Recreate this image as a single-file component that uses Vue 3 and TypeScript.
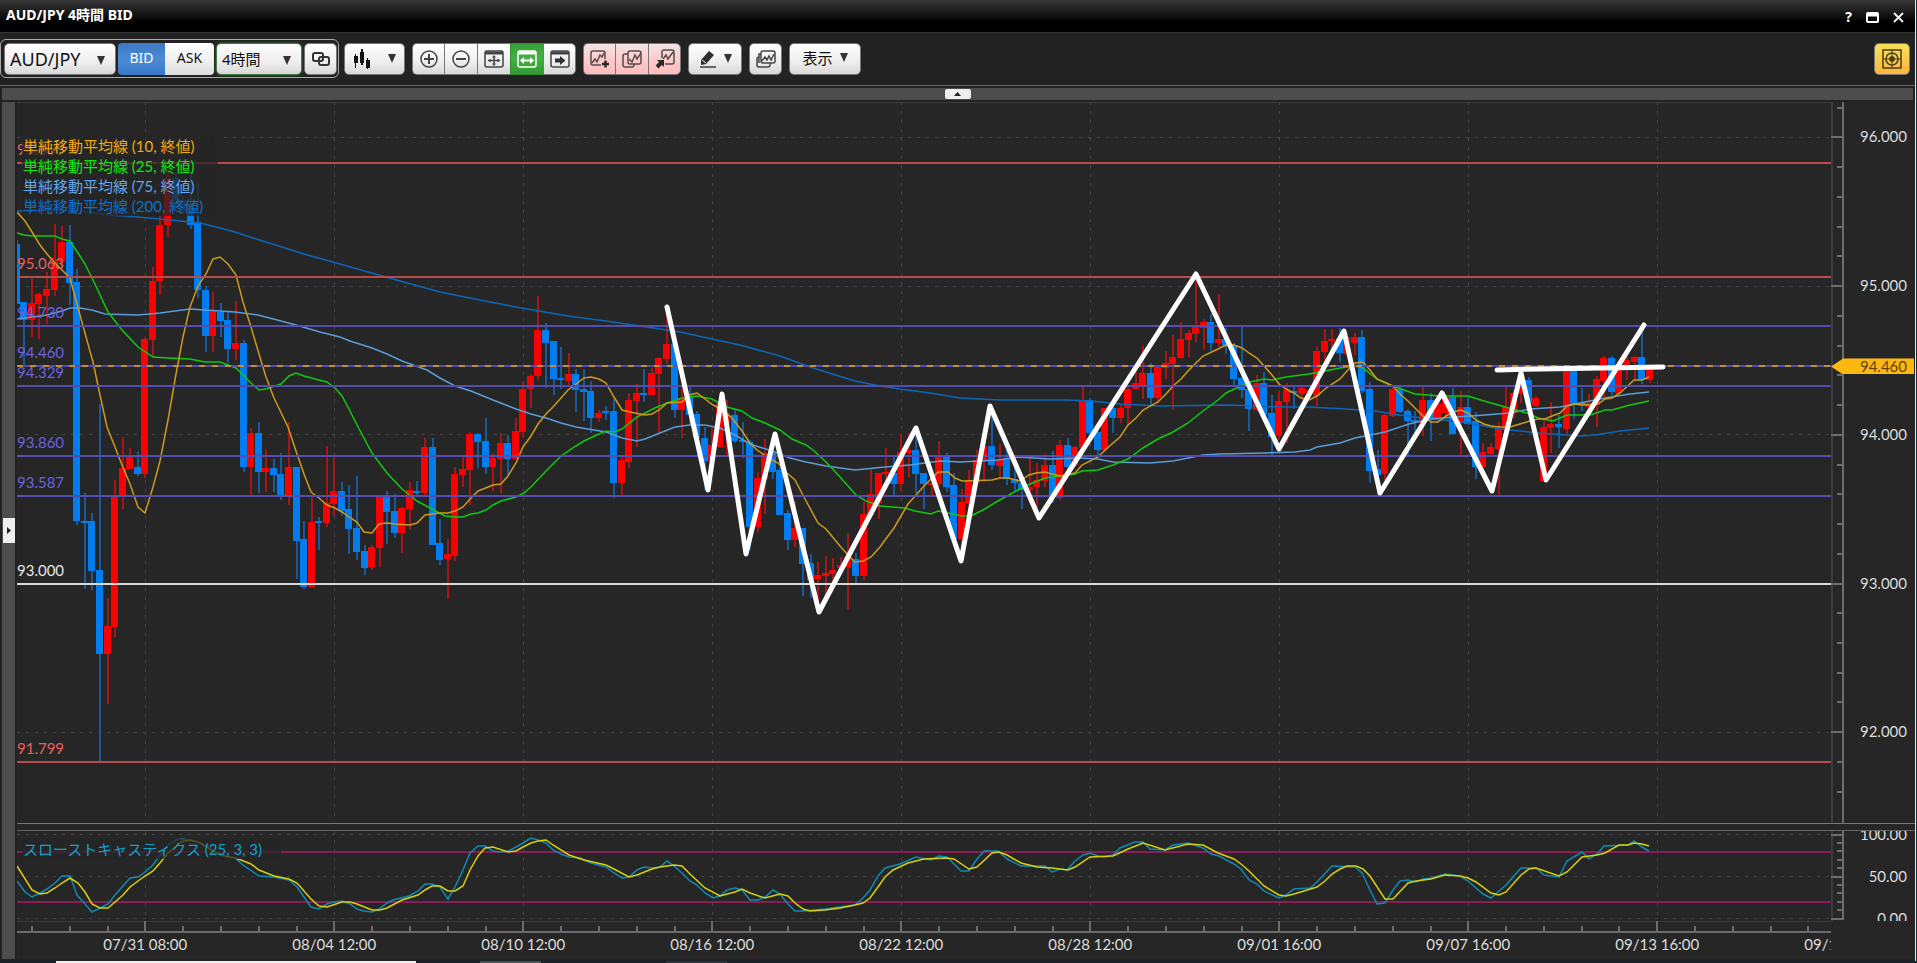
<script setup lang="ts">
import { ref } from 'vue'

type Pane = { x: number; y: number; w: number; h: number }
type Candle = { x: number; up: boolean; high: number; top: number; bottom: number; low: number }

const pair = ref('AUD/JPY')
const span = ref('4時間')
const side = ref<'BID' | 'ASK'>('BID')

const main: Pane = { x: 17, y: 102, w: 1814, h: 721 }
const stoch: Pane = { x: 17, y: 831, w: 1814, h: 90 }
const time: Pane = { x: 17, y: 921, w: 1814, h: 38 }
const viewBox = (p: Pane) => `${p.x} ${p.y} ${p.w} ${p.h}`
const pctY = (y: number, p: Pane) => `${((y - p.y) / p.h) * 100}%`
const pctX = (x: number, p: Pane) => `${((x - p.x) / p.w) * 100}%`

const priceY = (price: number) => 137.4 + (96 - price) * 148.7
const stochY = (v: number) => 918.5 - v * 0.84
const barX = (i: number) => 145.3 + i * 7.56

// r = rising, f = falling, then high, body top, body bottom, low
const bars = `
f 240 244 304 304;f 302 302 320 367;r 279 303 320 337;r 293 294 304 339;r 272 289 296 324;r 224 262 290 296;
r 226 242 262 267;f 225 242 283 305;f 269 282 521 525;f 493 521 523 589;f 513 521 571 590;f 404 570 654 762;
r 598 626 654 704;r 480 497 627 637;r 437 468 497 509;r 448 457 469 469;f 452 467 474 476;r 338 339 474 478;
r 267 281 340 356;r 215 225 281 295;r 172 178 225 237;f 172 178 200 205;f 197 200 212 214;f 175 203 225 229;
f 184 222 290 298;f 286 290 336 352;r 292 311 336 352;f 303 312 321 337;f 312 320 349 363;r 301 343 349 360;
f 340 343 467 472;r 428 433 467 496;f 422 433 472 493;r 450 468 472 492;f 459 468 475 492;f 453 474 495 500;
r 422 467 495 505;f 467 467 541 579;f 521 539 587 589;r 496 522 587 587;f 517 521 523 550;r 446 503 523 527;
r 457 491 504 516;f 482 491 511 516;f 485 509 529 554;f 476 528 552 560;f 545 551 568 575;r 545 547 567 570;
r 497 497 548 567;f 491 496 512 544;f 494 511 533 538;r 507 508 533 553;r 482 490 509 530;f 481 491 493 495;
r 438 447 493 495;f 438 447 545 545;f 519 543 560 565;r 539 554 559 599;r 467 474 556 561;r 455 469 475 487;
r 432 434 470 505;f 433 434 442 468;f 418 441 467 474;r 453 458 467 491;r 433 443 459 493;f 435 443 459 475;
r 418 431 459 460;r 381 389 432 437;r 374 376 389 408;r 296 330 376 380;f 323 330 343 388;f 341 341 379 395;
f 347 378 380 389;r 353 374 381 387;f 369 374 390 412;f 369 389 392 421;f 381 391 418 433;r 410 413 418 422;
f 406 411 413 420;f 399 411 483 498;r 455 460 483 496;r 393 400 462 468;r 384 393 401 447;f 369 393 395 402;
r 368 373 395 396;r 357 358 374 433;r 310 344 359 364;f 344 344 410 418;r 388 398 410 438;f 387 397 415 425;
f 411 414 438 440;f 427 438 461 490;r 427 445 461 462;r 400 403 447 448;r 400 413 423 456;f 410 415 441 443;
f 422 440 442 458;f 440 442 527 550;r 472 478 527 532;r 439 453 479 514;f 442 453 472 479;f 467 470 515 515;
f 510 513 540 550;r 501 528 540 547;f 528 528 564 596;f 554 563 580 598;r 562 575 579 614;r 556 573 576 596;
r 558 570 574 580;r 557 565 568 573;r 533 557 567 609;f 553 559 576 583;r 502 514 576 580;r 469 494 515 517;
r 473 473 503 519;r 448 472 474 490;f 457 473 484 496;r 434 452 484 491;r 433 450 453 477;f 432 450 474 493;
f 473 473 484 509;r 472 483 485 495;r 441 457 484 487;f 453 456 487 492;f 473 485 539 543;r 489 502 539 547;
r 470 481 503 505;r 450 460 483 487;r 437 446 461 482;f 415 446 465 470;r 444 459 466 478;f 447 458 479 485;
f 463 479 483 492;f 480 483 490 509;r 458 487 490 493;r 463 480 487 508;r 454 465 481 487;f 451 465 496 503;
r 440 445 498 500;f 438 445 467 470;r 446 447 465 467;r 387 401 448 450;f 398 400 433 434;f 431 432 450 455;
r 408 408 450 452;f 407 408 418 433;r 404 408 418 423;r 386 389 408 425;r 372 383 389 390;r 346 373 385 399;
f 363 373 398 405;r 367 367 398 403;r 351 363 368 379;r 335 357 364 410;r 322 339 358 359;r 330 333 340 357;
r 278 327 334 342;r 319 322 328 349;f 314 322 343 351;r 294 339 343 347;f 328 339 346 354;f 343 345 379 385;
f 326 378 390 398;f 385 389 409 431;r 375 383 410 411;f 372 383 415 417;f 395 413 437 456;r 392 401 436 440;
r 383 390 402 443;f 386 391 393 409;r 387 388 394 397;r 388 390 393 398;r 346 351 396 406;r 329 341 352 361;
r 329 339 341 351;f 328 339 353 362;r 332 337 354 355;r 333 337 343 355;f 330 337 391 393;f 382 389 471 483;
f 450 469 475 495;r 414 415 474 480;r 386 389 416 417;f 387 389 412 413;f 409 411 421 457;f 411 420 422 434;
r 386 400 423 436;f 393 400 420 441;r 400 403 418 421;r 395 398 413 417;f 388 397 434 435;r 391 407 423 455;
f 397 407 424 425;f 412 421 467 479;r 443 452 467 470;r 443 447 454 455;r 422 429 449 496;r 385 407 430 432;
r 389 393 413 418;r 375 380 394 403;f 377 380 403 405;r 396 398 406 407;r 420 427 481 482;r 402 424 428 453;
f 415 424 427 448;r 368 370 429 434;f 368 370 404 419;f 388 403 406 411;r 394 403 407 412;r 376 379 405 427;
r 356 358 381 397;f 356 358 392 395;r 362 364 393 395;r 356 360 367 380;r 356 357 362 380;f 328 357 380 384;
r 367 368 380 383`

const candles: Candle[] = bars.split(';').map((row, i) => {
  const [dir, ...v] = row.trim().split(' ')
  const [high, top, bottom, low] = v.map(Number)
  return { x: Math.round(barX(i - 17)), up: dir === 'r', high, top, bottom, low }
})

const ma10 = '17,212 25,221 32,232 40,245 47,254 55,263 62,270 70,278 78,308 93,362 100,395 107,427 115,447 122,465 130,484 138,507 145,513 153,487 160,461 168,420 176,374 183,337 190,307 198,286 206,274 213,259 220,257 228,264 236,275 243,302 251,327 259,354 266,377 274,398 288,427 296,451 304,474 311,492 319,498 327,505 335,508 342,512 349,517 357,522 364,532 372,533 379,524 387,523 395,524 410,525 417,523 425,515 440,513 448,513 455,511 463,507 471,498 478,491 493,485 501,484 508,476 516,463 523,447 531,436 538,424 546,414 553,407 561,398 568,390 576,384 584,378 591,377 599,379 606,383 614,397 622,410 630,412 645,415 652,414 659,410 667,403 682,402 689,395 697,393 705,399 713,405 721,409 732,418 742,431 750,443 757,450 772,460 778,463 787,473 795,480 805,499 818,523 826,529 840,546 848,555 855,562 863,561 871,557 880,547 885,540 894,528 901,516 908,504 916,495 924,486 931,479 938,472 948,472 955,478 962,481 992,480 1000,478 1008,478 1020,481 1029,475 1036,473 1045,472 1052,474 1060,476 1075,473 1082,465 1098,457 1105,450 1120,437 1128,425 1136,418 1143,410 1158,402 1166,394 1173,386 1181,379 1188,371 1196,363 1203,356 1218,349 1228,344 1234,345 1242,348 1249,353 1257,358 1264,366 1272,375 1279,384 1286,389 1294,393 1301,398 1309,400 1317,396 1325,389 1332,384 1340,379 1347,371 1355,363 1363,362 1370,370 1377,379 1384,382 1393,386 1401,395 1408,401 1416,409 1424,417 1431,422 1438,422 1446,416 1453,412 1461,410 1468,413 1476,420 1484,424 1491,426 1499,427 1510,427 1520,424 1530,421 1538,419 1545,419 1552,416 1560,413 1567,406 1575,404 1590,405 1598,404 1605,399 1612,398 1620,393 1634,380 1642,380 1649,377'
const ma25 = '17,233 24,235 32,236 55,236 62,239 70,241 78,253 85,264 93,280 100,295 108,312 122,330 138,347 153,357 168,358 190,359 205,362 220,362 236,368 251,383 259,390 266,389 281,384 289,376 296,373 304,376 319,380 327,382 335,388 342,396 349,409 357,425 372,453 387,473 402,489 417,501 432,509 445,516 455,517 463,517 471,514 478,513 486,510 493,505 501,501 516,497 524,493 531,487 546,471 561,456 576,446 584,441 599,434 606,431 614,432 622,429 637,417 645,413 655,408 667,403 682,398 697,396 712,399 727,407 742,411 752,418 765,423 780,430 792,439 806,445 813,450 826,462 840,477 856,495 866,501 880,506 892,507 905,508 915,511 931,514 938,511 948,513 962,516 971,516 983,510 998,501 1018,490 1030,484 1045,478 1060,476 1075,474 1082,471 1098,470 1113,465 1128,459 1143,448 1158,439 1173,432 1188,423 1203,411 1218,400 1226,393 1241,386 1250,382 1264,379 1272,380 1286,377 1309,374 1325,371 1340,368 1355,366 1363,368 1377,379 1393,386 1415,394 1440,396 1468,396 1484,401 1509,408 1530,414 1538,418 1553,421 1567,415 1590,415 1605,410 1612,410 1630,405 1649,401'
const ma75 = '17,319 32,317 47,315 62,311 70,308 80,308 92,310 105,314 138,315 160,313 190,309 205,310 235,312 258,315 281,321 296,325 320,332 340,337 350,341 372,348 387,354 402,361 427,370 440,378 455,386 471,391 493,400 516,409 531,414 546,418 561,423 576,427 606,432 622,438 637,441 645,439 655,435 665,431 675,427 690,425 705,425 720,428 735,435 750,444 772,451 790,458 806,462 826,466 855,470 885,467 910,465 940,461 960,462 980,461 998,460 1018,457 1050,459 1080,458 1098,459 1113,462 1150,463 1173,461 1203,455 1220,454 1264,453 1295,452 1310,450 1317,447 1340,443 1355,438 1385,432 1409,424 1430,419 1455,417 1485,415 1510,413 1530,409 1560,407 1575,404 1605,398 1630,394 1649,392'
const ma200 = '17,211 40,210 80,211 110,215 138,217 170,220 190,222 200,223 220,228 235,232 250,237 266,242 304,254 340,264 361,270 400,281 440,292 480,300 516,307 568,316 606,321 640,326 680,332 712,339 740,345 780,356 810,367 855,381 880,386 900,389 930,393 960,398 1000,400 1066,400 1090,401 1120,404 1160,406 1230,405 1280,407 1310,407 1345,409 1375,411 1400,415 1430,419 1455,421 1480,425 1500,429 1540,433 1580,436 1595,435 1620,431 1649,428'

const zigzag = '667,307 708,490 722,394 746,554 775,434 819,612 916,428 961,561 990,406 1039,518 1196,274 1279,449 1344,331 1380,493 1442,393 1492,491 1521,373 1546,480 1644,325'

const slowK = '17,881 25,892 32,897 40,893 47,889 55,883 62,876 70,876 77,895 85,904 92,912 100,908 108,904 115,895 130,878 138,877 145,872 153,865 160,855 168,845 176,840 183,839 198,842 213,851 228,857 235,858 243,865 259,876 274,877 289,880 297,887 311,907 319,909 327,904 334,902 342,901 350,904 357,909 364,911 372,912 379,909 387,903 393,900 409,896 418,891 425,884 432,884 440,887 448,899 455,887 463,870 470,853 478,846 485,846 493,851 500,852 508,851 516,847 523,843 531,838 538,840 546,843 553,850 561,854 569,857 580,858 591,863 606,867 614,873 622,878 629,877 637,870 644,867 652,868 660,867 667,861 674,866 682,873 690,881 697,885 705,893 713,898 720,896 727,890 735,888 742,890 750,900 758,900 765,897 773,890 780,894 788,904 795,911 803,911 825,909 840,907 855,905 863,898 870,890 878,876 885,868 900,864 916,857 931,860 939,856 947,857 961,871 969,871 977,859 984,851 998,851 1007,859 1021,866 1045,866 1052,872 1060,869 1067,870 1075,861 1083,855 1090,853 1098,856 1105,857 1113,855 1120,848 1135,842 1143,842 1150,849 1165,850 1173,845 1188,843 1203,848 1211,854 1219,856 1234,864 1241,869 1249,880 1257,884 1264,891 1279,898 1286,895 1294,889 1310,888 1317,882 1332,866 1355,867 1362,873 1370,890 1377,904 1385,903 1393,890 1400,881 1408,880 1416,882 1423,879 1431,878 1445,874 1460,876 1468,881 1483,894 1491,898 1506,885 1521,868 1536,868 1544,875 1559,877 1567,861 1582,852 1589,859 1597,854 1604,846 1628,845 1634,841 1642,847 1649,851'
const slowD = '17,866 32,890 40,894 47,893 55,888 62,883 70,878 78,883 85,892 92,904 100,908 108,908 115,902 123,895 130,887 138,881 145,876 153,871 160,863 168,853 176,846 183,841 190,840 198,842 206,846 213,851 220,855 236,858 251,864 259,870 274,876 289,879 297,883 311,899 319,906 327,907 342,902 350,902 357,904 372,910 380,910 387,908 402,900 418,895 425,890 432,886 440,886 448,891 455,891 463,886 470,870 478,856 485,848 493,847 508,852 516,851 523,847 531,843 538,841 546,840 553,845 569,855 584,860 606,865 614,869 629,877 637,875 652,869 660,867 674,865 682,866 690,874 705,888 720,896 735,892 742,889 750,893 765,898 780,894 788,896 795,903 803,909 810,911 825,910 840,908 855,905 863,903 870,898 878,887 885,877 893,870 908,863 924,859 946,858 954,859 969,869 977,867 992,853 999,852 1007,855 1021,863 1037,867 1052,868 1068,870 1075,867 1090,857 1113,856 1128,849 1143,843 1165,850 1188,844 1203,845 1218,853 1234,859 1241,864 1249,871 1264,886 1279,895 1286,896 1294,894 1317,887 1325,881 1332,874 1340,869 1347,866 1356,866 1363,869 1370,876 1385,899 1393,899 1408,883 1416,881 1431,879 1445,875 1460,876 1468,878 1476,882 1491,893 1499,895 1506,892 1521,875 1529,869 1536,868 1559,876 1567,872 1574,865 1582,857 1597,855 1605,853 1619,845 1628,845 1634,843 1642,844 1649,846'

const levels = [
  { price: 95.83, kind: 'red' },
  { price: 95.063, kind: 'red' },
  { price: 94.73, kind: 'violet' },
  { price: 94.46, kind: 'violet' },
  { price: 94.329, kind: 'violet' },
  { price: 93.86, kind: 'violet' },
  { price: 93.587, kind: 'violet' },
  { price: 93, kind: 'white' },
  { price: 91.799, kind: 'red' },
]
const current = 94.46
const priceMajors = [96, 95, 94, 93, 92]
const priceTicks = Array.from({ length: 24 }, (_, i) => 96.2 - i * 0.2)
const stochMajors = [100, 50, 0]
const stochTicks = Array.from({ length: 11 }, (_, i) => i * 10)
const dates = ['07/31 08:00', '08/04 12:00', '08/10 12:00', '08/16 12:00', '08/22 12:00', '08/28 12:00', '09/01 16:00', '09/07 16:00', '09/13 16:00', '09/19 16:00']
const dateMarks = dates.map((text, i) => ({ text, x: barX(i * 25) }))
const timeTicks = Array.from({ length: 48 }, (_, i) => barX((i - 3) * 5))

const legend = [
  { text: '単純移動平均線 (10, 終値)', kind: 'ma10' },
  { text: '単純移動平均線 (25, 終値)', kind: 'ma25' },
  { text: '単純移動平均線 (75, 終値)', kind: 'ma75' },
  { text: '単純移動平均線 (200, 終値)', kind: 'ma200' },
]
</script>

<template>
  <div class="desktop">
    <div class="window">
      <header class="titlebar">
        <h1>AUD/JPY 4時間 BID</h1>
        <div class="winbtns">
          <button type="button" aria-label="ヘルプ">?</button>
          <button type="button" aria-label="最大化">
            <svg width="13" height="11" viewBox="0 0 13 11"><rect x="1" y="1" width="11" height="9" rx="1" fill="none" stroke="#fff" stroke-width="2" /><path d="M1 3h11" stroke="#fff" stroke-width="3" /></svg>
          </button>
          <button type="button" aria-label="閉じる">
            <svg width="11" height="11" viewBox="0 0 11 11"><path d="M1 1l9 9M10 1l-9 9" stroke="#eee" stroke-width="2" /></svg>
          </button>
        </div>
      </header>

      <div class="toolbar">
        <div class="linked">
          <label class="picker pair">
            <select v-model="pair" aria-label="通貨ペア"><option>AUD/JPY</option></select>
            <svg width="8" height="9" viewBox="0 0 8 9"><path d="M0 0h8L4 9z" fill="#333" /></svg>
          </label>
          <div class="sides">
            <button type="button" class="side" :class="{ on: side === 'BID' }" @click="side = 'BID'">BID</button>
            <button type="button" class="side" :class="{ on: side === 'ASK' }" @click="side = 'ASK'">ASK</button>
          </div>
          <label class="picker span">
            <select v-model="span" aria-label="足種"><option>4時間</option></select>
            <svg width="8" height="9" viewBox="0 0 8 9"><path d="M0 0h8L4 9z" fill="#333" /></svg>
          </label>
          <button type="button" class="btn" aria-label="連動">
            <svg width="20" height="16" viewBox="0 0 20 16" fill="none" stroke="#333" stroke-width="2"><rect x="2" y="2" width="10" height="8" rx="2" /><rect x="8" y="6" width="10" height="8" rx="2" /></svg>
          </button>
        </div>

        <button type="button" class="btn kind" aria-label="チャート種類">
          <svg width="18" height="20" viewBox="0 0 18 20" fill="#111"><path d="M1 7h4v7H1zM2 5h1v14H2zM7 3h4v11H7zM8 0h2v16H8zM13 11h4v8h-4zM14 9h1v11h-1z" /></svg>
          <svg width="8" height="9" viewBox="0 0 8 9"><path d="M0 0h8L4 9z" fill="#333" /></svg>
        </button>

        <div class="group">
          <button type="button" class="btn" aria-label="拡大">
            <svg width="20" height="20" viewBox="0 0 20 20" fill="none" stroke="#444"><circle cx="10" cy="10" r="8" stroke-width="1.500" /><path d="M5 10h10M10 5v10" stroke-width="2" /></svg>
          </button>
          <button type="button" class="btn" aria-label="縮小">
            <svg width="20" height="20" viewBox="0 0 20 20" fill="none" stroke="#444"><circle cx="10" cy="10" r="8" stroke-width="1.500" /><path d="M5 10h10" stroke-width="2" /></svg>
          </button>
          <button type="button" class="btn" aria-label="全体表示">
            <svg width="20" height="18" viewBox="0 0 20 18" fill="none" stroke="#444"><rect x="1" y="1" width="18" height="16" rx="2" stroke-width="1.500" /><path d="M1 3h18" stroke-width="3" /><path d="M5 10.500h10M10 6v9" stroke-width="1.500" /><path d="M3.500 10.500l3-2v4zM16.500 10.500l-3-2v4zM10 5l-2 2.500h4zM10 16l-2-2.500h4z" fill="#444" stroke="none" /></svg>
          </button>
          <button type="button" class="btn green" aria-label="横幅調整">
            <svg width="20" height="18" viewBox="0 0 20 18" fill="none" stroke="#fff"><rect x="1" y="1" width="18" height="16" rx="2" stroke-width="1.500" /><path d="M1 3h18" stroke-width="3" /><path d="M6 10.500h8" stroke-width="2" /><path d="M3 10.500l4-3.500v7zM17 10.500l-4-3.500v7z" fill="#fff" stroke="none" /></svg>
          </button>
          <button type="button" class="btn" aria-label="最新へ移動">
            <svg width="20" height="18" viewBox="0 0 20 18" fill="none" stroke="#444"><rect x="1" y="1" width="18" height="16" rx="2" stroke-width="1.500" /><path d="M1 3h18" stroke-width="3" /><path d="M5 8.500h5V6l5.500 4.500L10 15v-2.500H5z" fill="#333" stroke="none" /></svg>
          </button>
        </div>

        <div class="group">
          <button type="button" class="btn pink" aria-label="テクニカル追加">
            <svg width="20" height="20" viewBox="0 0 20 20" fill="none" stroke="#5a4a4a" stroke-width="1.500"><path d="M11 16H3a2 2 0 01-2-2V4a2 2 0 012-2h10a2 2 0 012 2v6" /><path d="M2 14l3-4 2 3 3-7 2 2 2-4" /><path d="M12 15h7M15.500 11.500v7" stroke="#2a2a2a" stroke-width="2.500" /></svg>
          </button>
          <button type="button" class="btn pink" aria-label="テクニカル複製">
            <svg width="20" height="20" viewBox="0 0 20 20" fill="none" stroke="#5a4a4a" stroke-width="1.500"><rect x="6" y="2" width="13" height="13" rx="2" /><path d="M6 5H3a2 2 0 00-2 2v9a2 2 0 002 2h7a2 2 0 002-2v-1M7 10l3 3 3-7 2 4 4-6" /></svg>
          </button>
          <button type="button" class="btn pink" aria-label="テクニカル呼出">
            <svg width="20" height="20" viewBox="0 0 20 20" fill="none" stroke="#5a4a4a" stroke-width="1.500"><path d="M7 9V3a2 2 0 012-2h8a2 2 0 012 2v10a2 2 0 01-2 2h-7M8 10l3-4 2 4 5-7" /><path d="M2 11h7v7z" fill="#2a2a2a" stroke="none" /><path d="M7 13l-5 5" stroke="#2a2a2a" stroke-width="4" /></svg>
          </button>
        </div>

        <button type="button" class="btn draw" aria-label="描画">
          <svg width="18" height="18" viewBox="0 0 18 18"><path d="M2 10l8-9 5 4-8 9-5 1z" fill="#2e2e2e" /><path d="M3 10l4 3" stroke="#eee" /><path d="M1 17h16" stroke="#666" stroke-width="2" /></svg>
          <svg width="8" height="9" viewBox="0 0 8 9"><path d="M0 0h8L4 9z" fill="#333" /></svg>
        </button>

        <button type="button" class="btn lone" aria-label="チャート一覧">
          <svg width="20" height="18" viewBox="0 0 20 18" fill="none" stroke="#444" stroke-width="1.500"><rect x="5" y="1" width="14" height="12" rx="2" /><path d="M5 4H3v9M3 7a2 2 0 00-2 2v6a2 2 0 002 2h9a2 2 0 002-2v-2M6 11l3-4 2 3 2-4 2 4 3-6" /></svg>
        </button>

        <button type="button" class="btn show">
          表示
          <svg width="8" height="9" viewBox="0 0 8 9"><path d="M0 0h8L4 9z" fill="#333" /></svg>
        </button>

        <button type="button" class="btn target" aria-label="ターゲット">
          <svg width="20" height="20" viewBox="0 0 20 20" fill="none" stroke="#4a3d1a"><rect x="1" y="1" width="18" height="18" stroke-width="1.500" /><circle cx="10" cy="10" r="6" stroke-width="1.500" /><circle cx="10" cy="10" r="2.500" fill="#4a3d1a" /><path d="M1 10h18M10 1v18" /></svg>
        </button>
      </div>

      <div class="hbar">
        <button type="button" aria-label="ツールバーを畳む">
          <svg width="7" height="4" viewBox="0 0 7 4"><path d="M0 4l3.500-4L7 4z" fill="#222" /></svg>
        </button>
      </div>

      <main class="body">
        <div class="vbar">
          <button type="button" aria-label="サイドパネルを開く">
            <svg width="4" height="7" viewBox="0 0 4 7"><path d="M0 0l4 3.500L0 7z" fill="#222" /></svg>
          </button>
        </div>

        <section class="charts">
          <div class="plot">
            <svg class="canvas" :viewBox="viewBox(main)" preserveAspectRatio="none">
              <path class="edge" d="M17 102H1831" />
              <g class="grid">
                <path v-for="p in priceMajors" :key="p" :d="`M17 ${Math.floor(priceY(p)) + 0.5}H1831`" />
                <path v-for="d in dateMarks" :key="d.text" :d="`M${Math.floor(d.x) + 0.5} 102V823`" />
              </g>
              <g v-for="c in candles" :key="c.x" :class="c.up ? 'up' : 'down'">
                <rect class="wick" :x="c.x - 1" :y="c.high" width="2" :height="c.low - c.high" />
                <rect class="box" :x="c.x - 4" :y="c.top" width="7" :height="c.bottom - c.top" />
              </g>
              <polyline class="line ma200" :points="ma200" />
              <polyline class="line ma75" :points="ma75" />
              <polyline class="line ma25" :points="ma25" />
              <polyline class="line ma10" :points="ma10" />
              <path v-for="l in levels" :key="l.price" class="level" :class="l.kind" :d="`M17 ${Math.round(priceY(l.price))}H1831`" />
              <path class="now" :d="`M17 ${Math.round(priceY(current))}H1831`" />
              <polyline class="sketch" :points="zigzag" />
              <path class="sketch" d="M1497 370L1540 369L1663 367" />
            </svg>
            <span v-for="l in levels" :key="l.price" class="tag" :class="l.kind" :style="{ top: pctY(priceY(l.price), main) }">{{ l.price.toFixed(3) }}</span>
            <ul class="legend">
              <li v-for="l in legend" :key="l.text" :class="l.kind">{{ l.text }}</li>
            </ul>
          </div>
          <div class="axis">
            <svg class="canvas" viewBox="0 102 84 721" preserveAspectRatio="none">
              <path class="edge" d="M1 102V823" />
              <path class="tick" d="M12 102V823" />
              <path v-for="t in priceTicks" :key="t" class="tick" :d="`M6 ${Math.round(priceY(t))}H12`" />
              <path v-for="t in priceMajors" :key="t" class="tick" :d="`M0 ${Math.round(priceY(t))}H12`" />
            </svg>
            <span v-for="p in priceMajors" :key="p" class="mark" :style="{ top: pctY(priceY(p), main) }">{{ p.toFixed(3) }}</span>
            <span class="mark quote" :style="{ top: pctY(priceY(current), main) }">{{ current.toFixed(3) }}</span>
          </div>

          <div class="split"></div>

          <div class="plot">
            <svg class="canvas" :viewBox="viewBox(stoch)" preserveAspectRatio="none">
              <g class="grid">
                <path v-for="v in stochMajors" :key="v" :d="`M17 ${Math.floor(stochY(v)) + 0.5}H1831`" />
                <path v-for="d in dateMarks" :key="d.text" :d="`M${Math.floor(d.x) + 0.5} 831V921`" />
              </g>
              <path class="level band" d="M17 852H1831M17 902H1831" />
              <polyline class="line k" :points="slowK" />
              <polyline class="line d" :points="slowD" />
            </svg>
            <div class="legend osc">スローストキャスティクス (25, 3, 3)</div>
          </div>
          <div class="axis">
            <svg class="canvas" viewBox="0 831 84 90" preserveAspectRatio="none">
              <path class="edge" d="M1 831V921" />
              <path class="tick" d="M12 831V920" />
              <path v-for="t in stochTicks" :key="t" class="tick" :d="`M6 ${Math.round(stochY(t))}H12`" />
              <path v-for="t in stochMajors" :key="t" class="tick" :d="`M0 ${Math.round(stochY(t))}H12`" />
            </svg>
            <span v-for="v in stochMajors" :key="v" class="mark" :style="{ top: pctY(stochY(v), stoch) }">{{ v.toFixed(2) }}</span>
          </div>

          <div class="plot">
            <svg class="canvas" :viewBox="viewBox(time)" preserveAspectRatio="none">
              <path class="edge" d="M17 921H1831" />
              <path class="tick" d="M17 932H1831" />
              <path v-for="t in timeTicks" :key="t" class="tick" :d="`M${Math.round(t)} 926V932`" />
              <path v-for="d in dateMarks" :key="d.text" class="tick" :d="`M${Math.round(d.x)} 921V932`" />
            </svg>
            <span v-for="d in dateMarks" :key="d.text" class="date" :style="{ left: pctX(d.x, time) }">{{ d.text }}</span>
          </div>
          <div class="corner"></div>
        </section>
      </main>
    </div>
    <footer class="taskbar"><i class="lit"></i><i class="dim"></i><i class="faint"></i></footer>
  </div>
</template>

<style>
html,
body {
  margin: 0;
  background: #10262c;
}
</style>

<style scoped>
* {
  box-sizing: border-box;
}
.desktop {
  height: 100vh;
  display: flex;
  flex-direction: column;
  overflow: hidden;
  background: #12303a;
  font-family: 'Noto Sans', 'Noto Sans CJK JP', sans-serif;
  font-size: 15px;
}
.window {
  flex: 1;
  min-height: 0;
  margin-right: 1px;
  display: flex;
  flex-direction: column;
  background: #222;
  border-right: 1px solid #dfe6e8;
}
button {
  margin: 0;
  padding: 0;
  border: 0;
  font: inherit;
  color: #111;
}
svg {
  display: block;
}
.titlebar {
  height: 32px;
  flex: none;
  display: flex;
  align-items: center;
  justify-content: space-between;
  padding: 0 11px 2px 6px;
  background: linear-gradient(#383838, #000 70%);
}
.titlebar h1 {
  margin: 0;
  font-size: 14px;
  line-height: 20px;
  font-weight: 700;
  color: #fff;
}
.winbtns {
  display: flex;
  align-items: center;
  gap: 14px;
  padding-top: 4px;
}
.winbtns button {
  background: none;
  color: #fff;
  font-weight: 700;
  line-height: 14px;
  font-size: 14px;
}
.toolbar {
  height: 53px;
  flex: none;
  display: flex;
  align-items: center;
  gap: 7px;
  padding: 0 5px 1px 0;
  border-top: 1px solid #333;
}
.linked {
  display: flex;
  align-items: center;
  gap: 2px;
  height: 39px;
  padding: 0 1px 0 3px;
  border: 1px solid #aaa;
  border-radius: 6px;
  margin-right: -2px;
}
.btn,
.picker {
  height: 32px;
  display: flex;
  align-items: center;
  justify-content: center;
  background: linear-gradient(#fff, #eee 60%, #d8d8d8);
  border: 1px solid #777;
  border-radius: 5px;
}
.linked > .btn {
  width: 33px;
}
.picker {
  position: relative;
}
.picker svg {
  position: absolute;
  right: 10px;
  top: 12px;
  pointer-events: none;
}
.picker select {
  width: 100%;
  height: 100%;
  appearance: none;
  border: 0;
  background: none;
  padding: 0 5px;
  font: inherit;
  color: #111;
}
.pair {
  width: 112px;
  font-size: 18px;
}
.span {
  width: 86px;
  border-color: #3f7a3f;
  box-shadow: 0 0 3px #2f7a2f;
}
.sides {
  display: flex;
  height: 32px;
}
.side {
  width: 49px;
  font-size: 14px;
  background: linear-gradient(#fff, #eee 60%, #ddd);
  border-radius: 0 4px 4px 0;
  padding-bottom: 2px;
}
.side:first-child {
  width: 47px;
  border-radius: 4px 0 0 4px;
}
.side.on {
  background: linear-gradient(#3d78c4, #4a8ad6 50%, #3a78c8);
  color: #fff;
}
.kind {
  width: 61px;
  gap: 17px;
}
.group {
  display: flex;
}
.group .btn {
  width: 33px;
  border-radius: 0;
  border-right-width: 0;
}
.group .btn:first-child {
  width: 32px;
  border-radius: 5px 0 0 5px;
}
.group .btn:last-child {
  border-radius: 0 5px 5px 0;
  border-right-width: 1px;
}
.group .green {
  background: linear-gradient(#3a9e3a, #45b045 50%, #2f9a2f);
  border-color: #2f8a2f;
}
.group .pink {
  background: linear-gradient(#f3e4e4, #fcc8c8 60%, #ffbcbc);
}
.draw {
  width: 54px;
  gap: 7px;
}
.lone {
  width: 33px;
}
.show {
  width: 72px;
  gap: 7px;
  padding-bottom: 2px;
}
.target {
  width: 36px;
  margin-left: auto;
  background: linear-gradient(#f6e05a, #fdb63c);
}
.hbar {
  flex: none;
  height: 17px;
  border-top: 1px solid #666;
  padding: 2px 2px 2px 2px;
  background: linear-gradient(#4d4d4d, #4d4d4d) content-box #222;
  display: flex;
  align-items: center;
  justify-content: center;
}
.hbar button {
  width: 26px;
  height: 10px;
  border-radius: 2px;
  background: #eee;
  display: grid;
  place-items: center;
}
.body {
  flex: 1;
  min-height: 0;
  display: flex;
  padding-bottom: 2px;
}
.vbar {
  width: 13px;
  margin: 0 2px;
  flex: none;
  background: #4d4d4d;
  display: flex;
  align-items: center;
}
.vbar button {
  width: 12px;
  height: 25px;
  margin-left: 1px;
  background: #eee;
  display: grid;
  place-items: center;
}
.charts {
  flex: 1;
  min-width: 0;
  display: grid;
  grid-template-columns: minmax(0, 1fr) 84px;
  grid-template-rows: minmax(0, 1fr) 8px 90px 38px;
  background: #262626;
  font-family: Lato, 'Noto Sans CJK JP', sans-serif;
}
.plot,
.axis {
  position: relative;
  overflow: hidden;
}
.canvas {
  position: absolute;
  inset: 0;
  width: 100%;
  height: 100%;
}
.split {
  grid-column: 1 / -1;
  border-top: 1px solid #777;
  border-bottom: 1px solid #666;
}
.grid path {
  stroke: #434343;
  stroke-dasharray: 3 6;
}
.up .wick {
  fill: #a61616;
}
.up .box {
  fill: #fb0000;
}
.down .wick {
  fill: #17599c;
}
.down .box {
  fill: #027df0;
}
.line {
  fill: none;
  stroke-width: 1.5;
}
.line.ma10 {
  stroke: #cc9a1c;
}
.line.ma25 {
  stroke: #0fc90f;
}
.line.ma75 {
  stroke: #5a9bd8;
}
.line.ma200 {
  stroke: #0d66b8;
}
.line.k {
  stroke: #0f8ab4;
}
.line.d {
  stroke: #d6d00f;
}
.level {
  stroke-width: 2;
}
.level.red {
  stroke: #b84c4c;
}
.level.violet {
  stroke: #544cae;
}
.level.white {
  stroke: #d8d8d8;
}
.level.band {
  stroke: #8c1c58;
}
.now {
  stroke: #c0912c;
  stroke-width: 2;
  stroke-dasharray: 6 7;
}
.sketch {
  fill: none;
  stroke: #fff;
  stroke-width: 5;
  stroke-linejoin: round;
  stroke-linecap: round;
}
.edge {
  stroke: #3c3c3c;
  stroke-width: 2;
}
.tick {
  stroke: #6c6c6c;
  stroke-width: 2;
}
.tag {
  position: absolute;
  left: 0;
  margin-top: -24px;
  line-height: 20px;
}
.tag.red {
  color: #e8605c;
}
.tag.violet {
  color: #6a62e0;
}
.tag.white {
  color: #e4e4e4;
}
.legend {
  position: absolute;
  left: 5px;
  top: 34px;
  width: 196px;
  margin: 0;
  padding: 0 0 0 1px;
  list-style: none;
  line-height: 20px;
  white-space: nowrap;
  background: rgba(38, 38, 38, 0.75);
}
.legend .ma10 {
  color: #f0ac10;
}
.legend .ma25 {
  color: #0fe80f;
}
.legend .ma75 {
  color: #5fa8ee;
}
.legend .ma200 {
  color: #0f70cc;
}
.osc {
  top: 8px;
  width: 259px;
  color: #0fa0d0;
}
.mark {
  position: absolute;
  right: 8px;
  margin-top: -11px;
  line-height: 20px;
  color: #dcdcdc;
}
.mark.quote {
  left: 0;
  right: 1px;
  margin-top: -8px;
  padding-right: 7px;
  line-height: 16px;
  text-align: right;
  color: #5e4610;
  background: #fdb80f;
  clip-path: polygon(0 50%, 12px 0, 100% 0, 100% 100%, 12px 100%);
}
.date {
  position: absolute;
  top: 13px;
  line-height: 20px;
  color: #dcdcdc;
  white-space: nowrap;
  transform: translateX(-50%);
}
.taskbar {
  flex: none;
  height: 2px;
  display: flex;
  background: #10262c;
}
.taskbar i {
  height: 2px;
}
.lit {
  width: 360px;
  margin-left: 56px;
  background: #f0f0f0;
}
.dim {
  width: 61px;
  margin-left: 64px;
  background: #43545a;
}
.faint {
  width: 61px;
  margin-left: 125px;
  background: #22383e;
}
</style>
